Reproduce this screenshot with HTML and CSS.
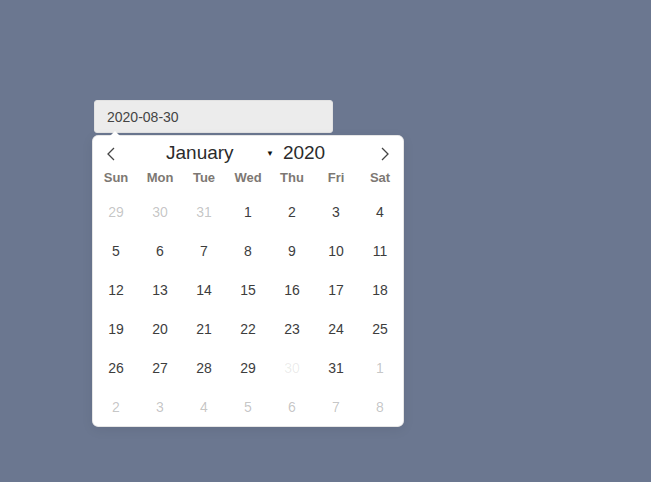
FILE: index.html
```html
<!DOCTYPE html>
<html>
<head>
  <link rel="stylesheet" href="styles.css">
</head>
<body>
  <div class="picker">
    <div class="date-input">2020-08-30</div>
    <div class="calendar">
      <div class="cal-months">
        <span class="nav-arrow">
          <svg width="8" height="14" viewBox="0 0 8 14"><path d="M7 1 L1 7 L7 13" fill="none" stroke="#444" stroke-width="1.3"/></svg>
        </span>
        <div class="current-month">
          <span class="month-name">January</span>
          <span class="caret">&#9660;</span>
          <span class="year">2020</span>
        </div>
        <span class="nav-arrow">
          <svg width="8" height="14" viewBox="0 0 8 14"><path d="M1 1 L7 7 L1 13" fill="none" stroke="#444" stroke-width="1.3"/></svg>
        </span>
      </div>
      <div class="weekdays">
        <span>Sun</span><span>Mon</span><span>Tue</span><span>Wed</span><span>Thu</span><span>Fri</span><span>Sat</span>
      </div>
      <div class="days">
        <span class="day other">29</span><span class="day other">30</span><span class="day other">31</span>
        <span class="day">1</span><span class="day">2</span><span class="day">3</span><span class="day">4</span>
        <span class="day">5</span><span class="day">6</span><span class="day">7</span><span class="day">8</span>
        <span class="day">9</span><span class="day">10</span><span class="day">11</span>
        <span class="day">12</span><span class="day">13</span><span class="day">14</span><span class="day">15</span>
        <span class="day">16</span><span class="day">17</span><span class="day">18</span>
        <span class="day">19</span><span class="day">20</span><span class="day">21</span><span class="day">22</span>
        <span class="day">23</span><span class="day">24</span><span class="day">25</span>
        <span class="day">26</span><span class="day">27</span><span class="day">28</span><span class="day">29</span>
        <span class="day disabled">30</span><span class="day">31</span><span class="day other">1</span>
        <span class="day other">2</span><span class="day other">3</span><span class="day other">4</span><span class="day other">5</span>
        <span class="day other">6</span><span class="day other">7</span><span class="day other">8</span>
      </div>
    </div>
  </div>
</body>
</html>
```

FILE: styles.css
```css
body {
  margin: 0;
  min-height: 100vh;
  background: #6b7790;
  font-family: "Liberation Sans", Arial, sans-serif;
}

.picker {
  padding: 100px 0 0 93px;
  width: 310px;
}

.date-input {
  margin-left: 1px;
  width: 239px;
  height: 33px;
  box-sizing: border-box;
  padding: 0 12px;
  line-height: 33px;
  font-size: 14px;
  color: #444;
  background: #ececec;
  border: 1px solid #e2e2e2;
  border-radius: 3px;
}

.calendar {
  position: relative;
  margin-top: 3px;
  width: 310px;
  background: #fff;
  border-radius: 5px;
  box-shadow: 1px 0 0 #e6e6e6, -1px 0 0 #e6e6e6, 0 1px 0 #e6e6e6, 0 -1px 0 #e6e6e6, 0 3px 13px rgba(0, 0, 0, 0.08);
}

/* little pointer under the input */
.calendar::before {
  content: '';
  position: absolute;
  top: -5px;
  left: 17px;
  border: 5px solid transparent;
  border-top: 0;
  border-bottom-color: #fff;
}

.cal-months {
  display: flex;
  align-items: center;
  height: 34px;
}

.nav-arrow {
  display: flex;
  justify-content: center;
  width: 36px;
  padding-top: 2px;
}

.current-month {
  flex: 1;
  display: flex;
  align-items: center;
  color: #2b2b2b;
  font-size: 19px;
  padding-left: 37px;
}

.month-name {
  width: 100px;
}

.caret {
  font-size: 8px;
  margin-right: 9px;
  color: #111;
}

.weekdays,
.days {
  display: grid;
  grid-template-columns: repeat(7, 44px);
  padding-left: 1px;
}

.weekdays {
  height: 14px;
  align-items: center;
}

.weekdays span {
  text-align: center;
  font-size: 13px;
  font-weight: bold;
  color: #7d7873;
}

.days {
  padding-top: 8px;
  grid-auto-rows: 39px;
}

.day {
  display: flex;
  align-items: center;
  justify-content: center;
  font-size: 14px;
  color: #3d3d3d;
}

.day.other {
  color: rgba(57, 57, 57, 0.3);
}

.day.disabled {
  color: rgba(57, 57, 57, 0.1);
}
```
